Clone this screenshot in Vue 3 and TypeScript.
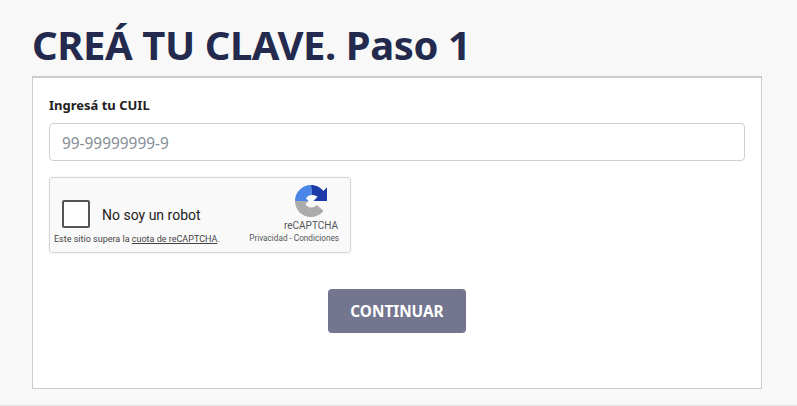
<script setup lang="ts">
const placeholder: string = '99-99999999-9'
</script>

<template>
  <main class="page">
    <h1 class="title">CREÁ TU CLAVE. Paso 1</h1>
    <section class="card">
      <label class="label" for="cuil">Ingresá tu CUIL</label>
      <input id="cuil" class="input" type="text" :placeholder="placeholder" />
      <div class="captcha">
        <div class="captcha-main">
          <span class="check"></span>
          <span class="robot">No soy un robot</span>
        </div>
        <div class="brand">
          <svg class="logo" viewBox="0 0 64 64" width="32" height="32" aria-hidden="true">
            <path d="M0 32 C0 14 14 0 32 0 L34 20 C28 20 24 23 22 27 L27 32 Z" fill="#4a86e8" />
            <path d="M32 0 C42 0 51 4.7 56.8 11.9 L64 4.7 L64 32 L37 32 L45.2 23.4 C42.4 21 38 20 34 20 Z" fill="#1c3aa9" />
            <path d="M0 32 L27 32 L21 38 C23 42 27 45 32 45 C37 45 41 43 44 40 L57 52 C51 59 42 64 32 64 C14 64 0 50 0 32 Z" fill="#ababab" />
          </svg>
          <span class="brand-name">reCAPTCHA</span>
          <span class="brand-links">Privacidad - Condiciones</span>
        </div>
        <p class="quota">Este sitio supera la <span class="quota-link">cuota de reCAPTCHA</span>.</p>
      </div>
      <div class="actions">
        <button class="btn" type="button">CONTINUAR</button>
      </div>
    </section>
  </main>
</template>

<style>
html, body { margin: 0; background: #f8f8f8; }
</style>

<style scoped>
.page {
  box-sizing: border-box;
  width: 797px;
  height: 406px;
  padding: 16px 35px 0 32px;
  background: #f8f8f8;
  border-bottom: 1px solid #e4e4e4;
  font-family: "Noto Sans", sans-serif;
}
.title {
  margin: 0;
  height: 60px;
  font-size: 40px;
  line-height: 58px;
  letter-spacing: -0.43px;
  font-weight: 700;
  color: #232a4d;
}
.card {
  box-sizing: border-box;
  height: 313px;
  padding: 17px 16px 0;
  background: #fff;
  border: 1px solid #ccc;
  border-top-width: 2px;
  display: flex;
  flex-direction: column;
}
.label {
  font-size: 13px;
  line-height: 20px;
  font-weight: 700;
  color: #212121;
}
.input {
  box-sizing: border-box;
  margin-top: 8px;
  width: 696px;
  height: 38px;
  padding: 2px 12px 0;
  border: 1px solid #cfcfd2;
  border-radius: 4px;
  font: 400 15.4px "Noto Sans", sans-serif;
  outline: none;
}
.input::placeholder { color: #868e96; opacity: 1; }
.captcha {
  box-sizing: border-box;
  position: relative;
  margin-top: 16px;
  width: 302px;
  height: 76px;
  background: #f9f9f9;
  border: 1px solid #d6d6d6;
  border-radius: 3px;
  box-shadow: 0 0 3px rgba(0, 0, 0, 0.08);
  display: flex;
  justify-content: space-between;
  font-family: Roboto, sans-serif;
  color: #000;
}
.captcha-main {
  display: flex;
  align-items: center;
  gap: 12px;
  padding: 22px 0 0 12px;
  height: 28px;
}
.check {
  box-sizing: border-box;
  width: 28px;
  height: 28px;
  background: #fff;
  border: 2px solid #555;
  border-radius: 2px;
}
.robot { font-size: 14px; color: #222; position: relative; top: 1px; }
.brand {
  margin-right: 11px;
  padding-top: 7px;
  display: flex;
  flex-direction: column;
  align-items: flex-end;
  color: #555;
}
.logo { display: block; margin-right: 12px; }
.brand-name { margin-top: 3px; font-size: 10px; line-height: 12px; margin-right: 1px; }
.brand-links {
  margin-top: 1px;
  font-size: 8.2px;
  line-height: 11px;
  white-space: nowrap;
}
.quota {
  position: absolute;
  left: 4px;
  bottom: 7px;
  margin: 0;
  font-size: 9px;
  line-height: 12px;
  color: #444;
}
.quota-link { text-decoration: underline; }
.actions {
  margin-top: 36px;
  display: flex;
  justify-content: center;
}
.btn {
  width: 138px;
  height: 44px;
  border: 0;
  border-radius: 4px;
  background: #74768f;
  color: #fff;
  font: 700 15.3px "Noto Sans", sans-serif;
}
</style>
